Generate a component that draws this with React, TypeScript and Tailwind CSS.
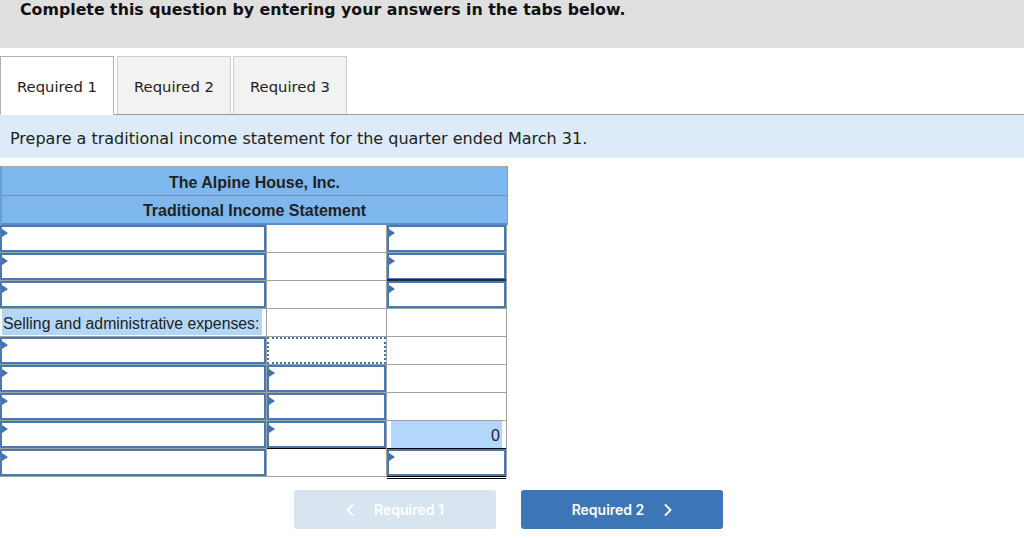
import React from 'react';

type Kind = 'input' | 'plain' | 'label' | 'dotted' | 'total';

interface Cell {
  kind: Kind;
  text?: string;
  topLine?: 'single' | 'thick';
  doubleBottom?: boolean;
}

function Triangle() {
  return (
    <svg className="absolute left-0 top-[2px]" width="6" height="8" viewBox="0 0 6 8">
      <path d="M0 0 L6 4 L0 8 Z" fill="#3f72b3" />
    </svg>
  );
}

function TableCell({ cell }: { cell: Cell }) {
  return (
    <div className="relative h-[28px] border-b border-b-[#a0a0a0] border-r border-r-[#a0a0a0]">
      {cell.topLine === 'thick' && <div className="absolute left-0 right-0 -top-[2px] h-[2px] bg-[#1b2c44] z-10" />}
      {cell.topLine === 'single' && <div className="absolute left-0 right-0 -top-[1px] h-[1px] bg-black z-10" />}
      {cell.kind === 'input' && (
        <div className="absolute inset-0 border-2 border-[#4a78b0] bg-white">
          <Triangle />
        </div>
      )}
      {cell.kind === 'dotted' && (
        <div className="absolute inset-0 border-2 border-dotted border-[#3f72b3]" />
      )}
      {cell.kind === 'label' && (
        <div className="absolute left-[2px] top-0 bottom-[1px] right-[4px] bg-[#b3d7fb] flex items-center pt-[3px] pl-[1px] text-[15.8px] text-[#222] whitespace-nowrap">
          {cell.text}
        </div>
      )}
      {cell.kind === 'total' && (
        <div className="absolute left-[4px] top-0 bottom-0 right-[4px] bg-[#b3d7fb] flex items-center justify-end pt-[3px] pr-[2px] text-[16px] text-[#222]">
          {cell.text}
        </div>
      )}
      {cell.doubleBottom && (
        <div className="absolute left-0 right-0 -bottom-[3px] h-[3px] border-t border-b border-black z-10" />
      )}
    </div>
  );
}

const rows: Cell[][] = [
  [{ kind: 'input' }, { kind: 'plain' }, { kind: 'input' }],
  [{ kind: 'input' }, { kind: 'plain' }, { kind: 'input' }],
  [{ kind: 'input' }, { kind: 'plain' }, { kind: 'input', topLine: 'thick' }],
  [{ kind: 'label', text: 'Selling and administrative expenses:' }, { kind: 'plain' }, { kind: 'plain' }],
  [{ kind: 'input' }, { kind: 'dotted' }, { kind: 'plain' }],
  [{ kind: 'input' }, { kind: 'input' }, { kind: 'plain' }],
  [{ kind: 'input' }, { kind: 'input' }, { kind: 'plain' }],
  [{ kind: 'input' }, { kind: 'input' }, { kind: 'total', text: '0' }],
  [{ kind: 'input' }, { kind: 'plain', topLine: 'single' }, { kind: 'input', topLine: 'single', doubleBottom: true }],
];

export default function App() {
  return (
    <div className="w-[1024px] h-[538px] bg-white overflow-hidden font-['DejaVu_Sans',Verdana,sans-serif] text-[#111]">
      {/* Banner */}
      <div className="h-[48px] bg-[#e0e0e0] pl-[20px] pt-[1px]">
        <div className="text-[15.8px] font-bold leading-[18px]">
          Complete this question by entering your answers in the tabs below.
        </div>
      </div>

      {/* Tabs */}
      <div className="mt-[8px] flex items-end border-b border-b-[#9a9a9a] h-[59px]">
        <div className="w-[114px] h-[59px] -mb-px bg-white border border-[#b0b0b0] border-b-white flex items-center justify-center pt-[4px] text-[14.8px] text-[#222]">
          Required 1
        </div>
        <div className="ml-[3px] w-[114px] h-[58px] bg-[#f2f2f2] border border-[#cfcfcf] border-b-0 flex items-center justify-center pt-[3px] text-[14.8px] text-[#222]">
          Required 2
        </div>
        <div className="ml-[2px] w-[114px] h-[58px] bg-[#f2f2f2] border border-[#cfcfcf] border-b-0 flex items-center justify-center pt-[3px] text-[14.8px] text-[#222]">
          Required 3
        </div>
      </div>

      {/* Instruction */}
      <div className="h-[43px] bg-[#dcebf7] pl-[10px] flex items-center pt-[5px] text-[16px] text-[#222]">
        Prepare a traditional income statement for the quarter ended March 31.
      </div>

      {/* Table */}
      <div className="mt-[8px] w-[508px] font-['Liberation_Sans',Arial,sans-serif]">
        <div className="border-t border-t-[#a8a8a8] border-l-2 border-l-[#6a9fd8] border-r border-r-[#9a9a9a] bg-[#7eb6ee]">
          <div className="h-[29px] flex items-center justify-center pt-[3px] text-[16px] font-bold text-[#222] border-b border-b-[#6d8fb3]">
            The Alpine House, Inc.
          </div>
          <div className="h-[29px] flex items-center justify-center pt-[3px] text-[16px] font-bold text-[#222] border-b-2 border-b-[#5b8cc4]">
            Traditional Income Statement
          </div>
        </div>
        <div className="grid grid-cols-[267px_120px_120px]">
          {rows.map((r, i) => (
            <React.Fragment key={i}>
              {r.map((c, j) => (
                <TableCell key={j} cell={c} />
              ))}
            </React.Fragment>
          ))}
        </div>
      </div>

      {/* Navigation buttons */}
      <div className="mt-[13px] flex gap-[25px] pl-[294px] font-['Inter',sans-serif]">
        <button className="w-[202px] h-[39px] rounded-[3px] bg-[#d9e4f1] text-white text-[14px] font-semibold flex items-center justify-center gap-[20px]">
          <svg width="8" height="12" viewBox="0 0 8 12" fill="none">
            <path d="M6.5 1 L1.5 6 L6.5 11" stroke="white" strokeWidth="1.8" strokeLinecap="round" strokeLinejoin="round" />
          </svg>
          <span>Required 1</span>
        </button>
        <button className="w-[202px] h-[39px] rounded-[3px] bg-[#3d76b6] text-white text-[14px] font-semibold flex items-center justify-center gap-[20px]">
          <span>Required 2</span>
          <svg width="8" height="12" viewBox="0 0 8 12" fill="none">
            <path d="M1.5 1 L6.5 6 L1.5 11" stroke="white" strokeWidth="1.8" strokeLinecap="round" strokeLinejoin="round" />
          </svg>
        </button>
      </div>
    </div>
  );
}
